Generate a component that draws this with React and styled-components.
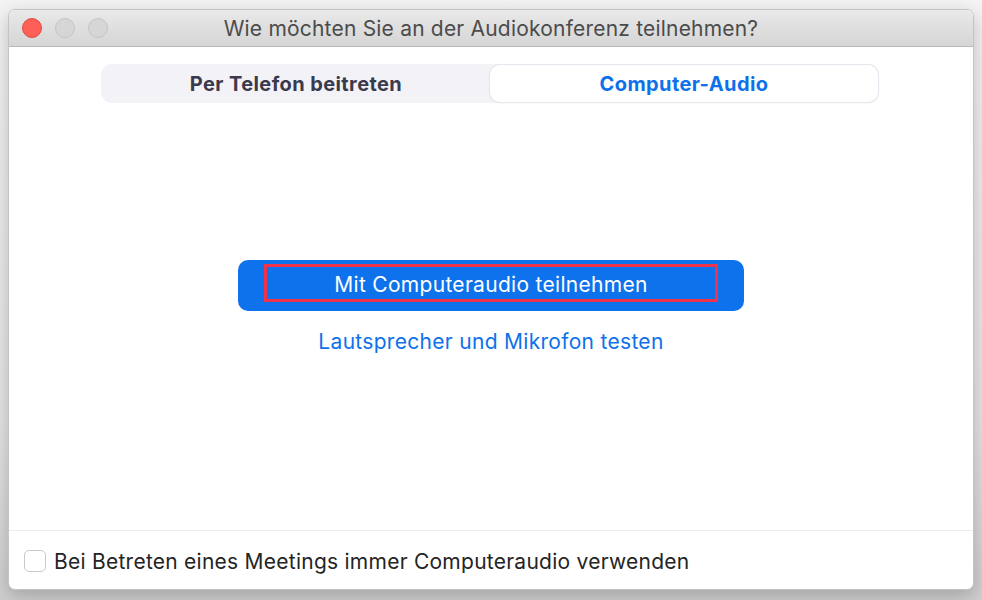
import React from "react";
import styled, { createGlobalStyle } from "styled-components";

const GlobalStyle = createGlobalStyle`
  html, body {
    margin: 0;
    padding: 0;
  }
  body {
    font-family: Inter, "Noto Sans", sans-serif;
    background: linear-gradient(#f3f3f3, #e4e4e4 70%, #cfcfcf);
    width: 982px;
    height: 600px;
    overflow: hidden;
  }
`;

const Page = styled.div`
  padding: 9px 8px 0 8px;
  height: 600px;
  box-sizing: border-box;
`;

const Window = styled.div`
  width: 966px;
  height: 581px;
  box-sizing: border-box;
  border: 1px solid #c4c4c4;
  border-radius: 7px;
  overflow: hidden;
  display: flex;
  flex-direction: column;
  background: #ffffff;
  box-shadow: 0 6px 18px rgba(0, 0, 0, 0.22);
`;

const TitleBar = styled.div`
  height: 37px;
  flex-shrink: 0;
  box-sizing: border-box;
  display: flex;
  align-items: center;
  position: relative;
  background: linear-gradient(#e9e9e9, #d5d5d5);
  border-bottom: 1px solid #b9b9b9;
`;

const Lights = styled.div`
  display: flex;
  gap: 13px;
  padding-left: 13px;
`;

const Light = styled.span`
  width: 20px;
  height: 20px;
  border-radius: 50%;
  box-sizing: border-box;
  background: ${(p) => (p.$active ? "#fe5f57" : "#d6d6d6")};
  border: 1px solid ${(p) => (p.$active ? "#e2463f" : "#c4c4c4")};
`;

const Title = styled.div`
  position: absolute;
  left: 0;
  right: 0;
  padding-top: 1px;
  text-align: center;
  font-size: 21px;
  letter-spacing: 0.2px;
  color: #4b4b4b;
  pointer-events: none;
`;

const Body = styled.div`
  flex: 1;
  display: flex;
  flex-direction: column;
`;

const Segmented = styled.div`
  margin: 17px 0 0 92px;
  width: 778px;
  height: 39px;
  display: grid;
  grid-template-columns: 1fr 1fr;
  background: #f2f2f7;
  border-radius: 11px;
  padding: 1px;
  box-sizing: border-box;
`;

const Segment = styled.div`
  display: flex;
  align-items: center;
  justify-content: center;
  font-size: 20px;
  letter-spacing: 0.4px;
  font-weight: 700;
  border-radius: 10px;
  color: ${(p) => (p.$selected ? "#0e71eb" : "#3a3a4c")};
  background: ${(p) => (p.$selected ? "#ffffff" : "transparent")};
  box-shadow: ${(p) =>
    p.$selected ? "0 0 0 1px #e6e6ee, 0 1px 3px rgba(0,0,0,0.06)" : "none"};
`;

const Main = styled.div`
  flex: 1;
  display: flex;
  flex-direction: column;
  align-items: center;
  padding-top: 157px;
`;

const JoinButton = styled.button`
  width: 506px;
  height: 51px;
  border: none;
  border-radius: 10px;
  background: #0e72ed;
  display: flex;
  align-items: center;
  justify-content: center;
  padding: 0;
  cursor: pointer;
`;

const Highlight = styled.span`
  width: 454px;
  height: 38px;
  box-sizing: border-box;
  border: 3px solid #ef3348;
  display: flex;
  align-items: center;
  justify-content: center;
  padding-top: 3px;
  font-family: Inter, "Noto Sans", sans-serif;
  font-size: 21px;
  letter-spacing: 0.3px;
  color: #ffffff;
  margin-top: -5px;
`;

const TestLink = styled.a`
  margin-top: 18px;
  font-size: 21px;
  letter-spacing: 0.3px;
  color: #0e71eb;
  text-decoration: none;
  cursor: pointer;
`;

const Footer = styled.label`
  height: 59px;
  flex-shrink: 0;
  box-sizing: border-box;
  border-top: 1px solid #ececf2;
  display: flex;
  align-items: center;
  gap: 8px;
  padding: 2px 0 0 15px;
  font-size: 21px;
  letter-spacing: 0.25px;
  color: #242424;
`;

const Checkbox = styled.span`
  width: 22px;
  height: 22px;
  box-sizing: border-box;
  border: 1px solid #c9c9c9;
  border-radius: 5px;
  background: #ffffff;
`;

export default function App() {
  return (
    <>
      <GlobalStyle />
      <Page>
        <Window>
          <TitleBar>
            <Lights>
              <Light $active />
              <Light />
              <Light />
            </Lights>
            <Title>Wie möchten Sie an der Audiokonferenz teilnehmen?</Title>
          </TitleBar>
          <Body>
            <Segmented>
              <Segment>Per Telefon beitreten</Segment>
              <Segment $selected>Computer-Audio</Segment>
            </Segmented>
            <Main>
              <JoinButton>
                <Highlight>Mit Computeraudio teilnehmen</Highlight>
              </JoinButton>
              <TestLink>Lautsprecher und Mikrofon testen</TestLink>
            </Main>
            <Footer>
              <Checkbox />
              Bei Betreten eines Meetings immer Computeraudio verwenden
            </Footer>
          </Body>
        </Window>
      </Page>
    </>
  );
}
